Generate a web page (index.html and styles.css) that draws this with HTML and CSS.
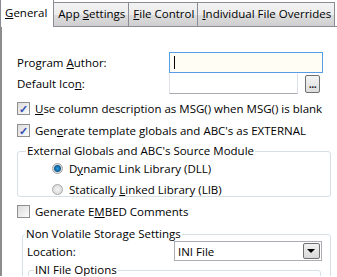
FILE: index.html
```html
<!DOCTYPE html>
<html lang="en">

<head>
  <meta charset="UTF-8">
  <meta name="viewport" content="width=device-width, initial-scale=1.0">
  <link rel="stylesheet" href="styles.css">
  <title>General</title>
</head>

<body>
  <div class="tabs">
    <div class="tab active"><u>G</u>eneral</div>
    <div class="tab">App <u>S</u>ettings</div>
    <div class="tab"><u>F</u>ile Control</div>
    <div class="tab"><u>I</u>ndividual File Overrides</div>
  </div>

  <div class="panel">
    <div class="row field">
      <label class="label">Program <u>A</u>uthor:</label>
      <div class="input focus"><span class="caret"></span></div>
    </div>
    <div class="row field">
      <label class="label">Default Ico<u>n</u>:</label>
      <div class="input short"></div>
      <div class="dots">...</div>
    </div>

    <div class="row check first">
      <span class="box checked">&#10003;</span>
      <span><u>U</u>se column description as MSG() when MSG() is blank</span>
    </div>
    <div class="row check">
      <span class="box checked">&#10003;</span>
      <span>Gen<u>e</u>rate template globals and ABC's as EXTERNAL</span>
    </div>

    <fieldset class="group external">
      <legend>External Globals and ABC's Source Module</legend>
      <div class="row radio-row">
        <span class="radio on"></span>
        <span>D<u>y</u>namic Link Library (DLL)</span>
      </div>
      <div class="row radio-row last">
        <span class="radio"></span>
        <span>Statically <u>L</u>inked Library (LIB)</span>
      </div>
    </fieldset>

    <div class="row check embed">
      <span class="box"></span>
      <span>Generate E<u>M</u>BED Comments</span>
    </div>

    <fieldset class="group storage">
      <legend>Non Volatile Storage Settings</legend>
      <div class="row location">
        <label class="label loc">Location:</label>
        <div class="select">
          <span>INI File</span>
          <span class="arrow"></span>
        </div>
      </div>
      <fieldset class="group inner">
        <legend>INI File Options</legend>
      </fieldset>
    </fieldset>
  </div>
</body>

</html>
```

FILE: styles.css
```css
* {
  box-sizing: border-box;
}

body {
  margin: 0;
  background: #fff;
  font-family: "Open Sans", "Noto Sans", sans-serif;
  font-size: 11.5px;
  color: #000;
  width: 337px;
  height: 277px;
  overflow: hidden;
}

u {
  text-decoration: underline;
  text-underline-offset: 1px;
}

.tabs {
  display: flex;
  align-items: flex-end;
  height: 27px;
  border-bottom: 1px solid #898c95;
}

.tab {
  height: 24px;
  line-height: 21px;
  padding: 0 3px 0 4px;
  border: 1px solid #898c95;
  border-left: none;
  border-bottom: none;
  background: linear-gradient(#f3f3f3, #ebebeb 50%, #dddddd 51%, #cfcfcf);
  white-space: nowrap;
}

.tab.active {
  height: 28px;
  line-height: 25px;
  background: #fff;
  border-left: 1px solid #898c95;
  margin-bottom: -1px;
  padding: 0 6px 0 4px;
}

.panel {
  border-left: 2px solid #8c8c8c;
  height: 249px;
  overflow: hidden;
  padding: 25px 0 0 15px;
}

.row {
  display: flex;
  align-items: center;
}

.field {
  height: 21px;
}

.label {
  width: 152px;
}

.input {
  height: 21px;
  border: 1px solid #abadb3;
  border-top-color: #e3e9ef;
  border-left-color: #e2e3ea;
  border-right-color: #dbdfe6;
  width: 154px;
  display: flex;
  align-items: center;
}

.input.focus {
  border-color: #569de5;
  background: #fffdf4;
}

.caret {
  width: 1px;
  height: 13px;
  background: #000;
  margin-left: 4px;
}

.input.short {
  width: 129px;
  border-top-color: #fff;
}

.dots {
  width: 15px;
  height: 18px;
  margin-left: 7px;
  border: 1px solid #707070;
  border-radius: 2px;
  background: linear-gradient(#f4f4f4, #dcdcdc);
  font-family: "DejaVu Sans", sans-serif;
  font-size: 8px;
  font-weight: bold;
  line-height: 20px;
  text-align: center;
  letter-spacing: -0.5px;
  color: #222;
}

.check {
  height: 22px;
  gap: 5px;
}

.check.first {
  margin-top: 3px;
}

.check.embed {
  margin-top: 3px;
}

.box {
  width: 13px;
  height: 13px;
  border: 1px solid #8f8f8f;
  background: linear-gradient(135deg, #dcdcdc, #fbfbfb);
  font-size: 11px;
  line-height: 11px;
  text-align: center;
  color: #3a4fb3;
  font-weight: bold;
}

.group {
  margin: 0;
  padding: 0;
  border: 1px solid #d5dfe5;
  border-radius: 3px;
  min-width: 0;
}

.group legend {
  padding: 0 1px;
  line-height: 14px;
}

.external {
  width: 314px;
  margin-top: 3px;
}

.external legend {
  margin-left: 8px;
}

.radio-row {
  height: 21px;
  gap: 6px;
  padding-left: 34px;
}

.radio-row.last {
  margin-bottom: -4px;
}

.radio {
  width: 11px;
  height: 11px;
  border-radius: 50%;
  border: 1px solid #a6a6a6;
  background: radial-gradient(circle, #f4f4f4, #d4d4d4);
}

.radio.on {
  background: radial-gradient(circle, #2b9fe0 0, #0e5c94 3px, #dadada 4px, #f4f4f4);
}

.storage {
  width: 309px;
  margin: 5px 0 0 5px;
  padding: 0 0 0 4px;
}

.storage legend {
  margin-left: -2px;
}

.location {
  height: 20px;
}

.label.loc {
  width: 147px;
}

.select {
  width: 148px;
  height: 20px;
  border: 1px solid #abadb3;
  display: flex;
  align-items: center;
  justify-content: space-between;
  padding-left: 3px;
}

.arrow {
  width: 17px;
  height: 16px;
  border: 1px solid #707070;
  border-radius: 2px;
  margin-right: 1px;
  background: linear-gradient(#f2f2f2, #d8d8d8);
  position: relative;
}

.arrow::after {
  content: "";
  position: absolute;
  left: 3px;
  top: 5px;
  border-left: 4px solid transparent;
  border-right: 4px solid transparent;
  border-top: 4px solid #000;
}

.inner {
  width: 293px;
  margin: 2px 0 0 1px;
  height: 40px;
}

.inner legend {
  margin-left: 5px;
}
```
